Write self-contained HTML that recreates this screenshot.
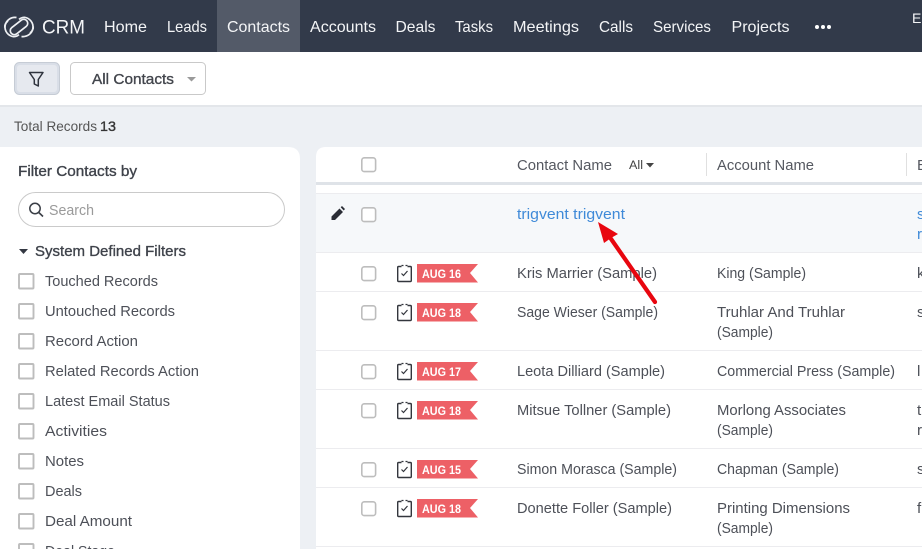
<!DOCTYPE html>
<html><head><meta charset="utf-8"><style>
html,body{margin:0;padding:0;width:922px;height:549px;overflow:hidden;background:#edf0f4}
svg{display:block}
text{font-family:"Liberation Sans",sans-serif;font-size:15.2px;fill:#4d5058}
.n{fill:#f4f5f7;font-size:15.6px}
.h{fill:#555860;font-size:15.2px}
.b{fill:#3f434b;font-size:15px;stroke:#3f434b;stroke-width:.35px}
.t{fill:#fff;font-weight:bold;font-size:11.5px}
.c{fill:#fff;stroke:#bdbdbd;stroke-width:1.6}
</style></head><body>
<svg width="922" height="549" viewBox="0 0 922 549" xmlns="http://www.w3.org/2000/svg">
<defs>
<g id="tag">
<path d="M417 264H478L470 273L478 282.500H417Z" fill="#ed6066"/>
<rect x="397.700" y="266.500" width="13.600" height="15" rx="1" fill="none" stroke="#33363d" stroke-width="1.400"/>
<rect x="401.500" y="264" width="6" height="4" fill="#fff"/>
<path d="M401.500 265.500H407.500" stroke="#33363d" stroke-width="1.300" stroke-dasharray="2 2"/>
<path d="M401.500 273.500L403.500 275.500L407.500 271" fill="none" stroke="#33363d" stroke-width="1.200"/>
</g>
</defs>

<rect width="922" height="52" fill="#323a4a"/>
<rect x="217" width="83" height="52" fill="#535a68"/>
<g fill="none" stroke="#eef0f3" stroke-width="1.700">
<path d="M16.500 17.500A10 9.700 0 0 0 13.500 36.700C16 36.700 17.500 35.900 19 34.600"/>
<path d="M21.500 36.500A10 9.700 0 0 0 24.500 17.300C22 17.300 20.500 18.100 19 19.400"/>
<rect x="9" y="23" width="20" height="8" rx="4" transform="rotate(-38 19 27)"/>
<path d="M8 21C5.500 23 4.500 25 4.800 27.500M30 33C32.500 31 33.500 29 33.200 26.500"/>
</g>
<text x="42" y="33.500" class="n" style="font-size:19px" textLength="43" lengthAdjust="spacingAndGlyphs">CRM</text>
<text x="104" y="32" class="n" textLength="43" lengthAdjust="spacingAndGlyphs">Home</text>
<text x="167" y="32" class="n" textLength="40" lengthAdjust="spacingAndGlyphs">Leads</text>
<text x="227" y="32" class="n" textLength="63" lengthAdjust="spacingAndGlyphs">Contacts</text>
<text x="310" y="32" class="n" textLength="66" lengthAdjust="spacingAndGlyphs">Accounts</text>
<text x="395.500" y="32" class="n" textLength="40" lengthAdjust="spacingAndGlyphs">Deals</text>
<text x="455" y="32" class="n" textLength="38" lengthAdjust="spacingAndGlyphs">Tasks</text>
<text x="513" y="32" class="n" textLength="66" lengthAdjust="spacingAndGlyphs">Meetings</text>
<text x="599" y="32" class="n" textLength="34" lengthAdjust="spacingAndGlyphs">Calls</text>
<text x="653" y="32" class="n" textLength="58" lengthAdjust="spacingAndGlyphs">Services</text>
<text x="731.500" y="32" class="n" textLength="58" lengthAdjust="spacingAndGlyphs">Projects</text>
<circle cx="817" cy="27" r="2" fill="#fff"/><circle cx="823" cy="27" r="2" fill="#fff"/><circle cx="829" cy="27" r="2" fill="#fff"/>
<text x="912" y="23" class="n" style="font-size:14px">En</text>

<rect y="52" width="922" height="53" fill="#fff"/>
<rect y="105" width="922" height="2" fill="#e3e6ea"/>
<rect x="14.500" y="62.500" width="45" height="32" rx="5" fill="#d9dee7" stroke="#c6ccd5"/>
<rect x="17" y="65" width="40" height="27" rx="3" fill="#e6e9ef"/>
<path d="M29.500 72.500H43L38.300 79.500V86L34.300 84V79.500Z" fill="none" stroke="#2f343e" stroke-width="1.500" stroke-linejoin="round"/>
<rect x="70.500" y="62.500" width="135" height="32" rx="4" fill="#fff" stroke="#c9c9c9"/>
<text x="92" y="84" class="b" style="fill:#43464d;stroke:#43464d" textLength="82" lengthAdjust="spacingAndGlyphs">All Contacts</text>
<path d="M187 77H196L191.500 81.500Z" fill="#9a9a9a"/>
<text x="14" y="131" style="font-size:13.800px;fill:#555" textLength="83" lengthAdjust="spacingAndGlyphs">Total Records</text>
<text x="100" y="131" style="font-size:13.800px;fill:#333;stroke:#333;stroke-width:.35px" textLength="16" lengthAdjust="spacingAndGlyphs">13</text>

<path d="M0 147H288Q300 147 300 159V549H0Z" fill="#fff"/>
<text x="18" y="176" class="b" textLength="119" lengthAdjust="spacingAndGlyphs">Filter Contacts by</text>
<rect x="18.500" y="192.500" width="266" height="34" rx="17" fill="#fff" stroke="#cacaca"/>
<circle cx="35" cy="208.500" r="5.200" fill="none" stroke="#3b3f47" stroke-width="1.500"/>
<path d="M38.800 212.500L43 216.500" stroke="#3b3f47" stroke-width="1.600"/>
<text x="49" y="215" style="fill:#9a9a9a" textLength="45" lengthAdjust="spacingAndGlyphs">Search</text>
<path d="M19 249H28L23.500 254Z" fill="#333842"/>
<text x="35" y="256" class="b" textLength="151" lengthAdjust="spacingAndGlyphs">System Defined Filters</text>

<g fill="#fff" stroke="#bdbdbd" stroke-width="1.900">
<rect x="19" y="274" width="14.500" height="14.500" rx="1"/>
<rect x="19" y="304" width="14.500" height="14.500" rx="1"/>
<rect x="19" y="334" width="14.500" height="14.500" rx="1"/>
<rect x="19" y="364" width="14.500" height="14.500" rx="1"/>
<rect x="19" y="394" width="14.500" height="14.500" rx="1"/>
<rect x="19" y="424" width="14.500" height="14.500" rx="1"/>
<rect x="19" y="454" width="14.500" height="14.500" rx="1"/>
<rect x="19" y="484" width="14.500" height="14.500" rx="1"/>
<rect x="19" y="514" width="14.500" height="14.500" rx="1"/>
<rect x="19" y="544" width="14.500" height="14.500" rx="1"/>
</g>
<text x="45" y="286" textLength="113" lengthAdjust="spacingAndGlyphs">Touched Records</text>
<text x="45" y="316" textLength="130" lengthAdjust="spacingAndGlyphs">Untouched Records</text>
<text x="45" y="346" textLength="93" lengthAdjust="spacingAndGlyphs">Record Action</text>
<text x="45" y="376" textLength="154" lengthAdjust="spacingAndGlyphs">Related Records Action</text>
<text x="45" y="406" textLength="125" lengthAdjust="spacingAndGlyphs">Latest Email Status</text>
<text x="45" y="436" textLength="62" lengthAdjust="spacingAndGlyphs">Activities</text>
<text x="45" y="466" textLength="39" lengthAdjust="spacingAndGlyphs">Notes</text>
<text x="45" y="496" textLength="37" lengthAdjust="spacingAndGlyphs">Deals</text>
<text x="45" y="526" textLength="87" lengthAdjust="spacingAndGlyphs">Deal Amount</text>
<text x="45" y="556" textLength="70" lengthAdjust="spacingAndGlyphs">Deal Stage</text>

<path d="M922 147H326Q316 147 316 157V549H922Z" fill="#fff"/>
<rect x="316" y="182" width="606" height="3" fill="#dfe3e8"/>
<rect x="316" y="193" width="606" height="59" fill="#f6f8fa"/>
<g fill="#ececef">
<rect x="316" y="193" width="606" height="1"/>
<rect x="316" y="252" width="606" height="1"/>
<rect x="316" y="291" width="606" height="1"/>
<rect x="316" y="350" width="606" height="1"/>
<rect x="316" y="389" width="606" height="1"/>
<rect x="316" y="448" width="606" height="1"/>
<rect x="316" y="487" width="606" height="1"/>
<rect x="316" y="546" width="606" height="1"/>
<rect x="706" y="153" width="1" height="23" fill="#e0e0e0"/>
<rect x="906" y="153" width="1" height="23" fill="#e0e0e0"/>
</g>
<rect class="c" x="361.800" y="157.800" width="13.800" height="13.800" rx="2.500"/>
<rect class="c" x="361.800" y="207.800" width="13.800" height="13.800" rx="2.500"/>
<rect class="c" x="361.800" y="266.800" width="13.800" height="13.800" rx="2.500"/>
<rect class="c" x="361.800" y="305.800" width="13.800" height="13.800" rx="2.500"/>
<rect class="c" x="361.800" y="364.800" width="13.800" height="13.800" rx="2.500"/>
<rect class="c" x="361.800" y="403.800" width="13.800" height="13.800" rx="2.500"/>
<rect class="c" x="361.800" y="462.800" width="13.800" height="13.800" rx="2.500"/>
<rect class="c" x="361.800" y="501.800" width="13.800" height="13.800" rx="2.500"/>

<text x="517" y="170" class="h" textLength="95" lengthAdjust="spacingAndGlyphs">Contact Name</text>
<text x="629" y="169" style="font-size:11.500px;fill:#444" textLength="14" lengthAdjust="spacingAndGlyphs">All</text>
<path d="M646 163H654L650 167.500Z" fill="#444"/>
<text x="717" y="170" class="h" textLength="97" lengthAdjust="spacingAndGlyphs">Account Name</text>
<text x="917" y="170" class="h">E</text>

<path d="M331.500 216.500L339.500 208.500L343 212L335 220H331.500Z M340.700 207.300L342 206L345 209L343.700 210.500Z" fill="#2a2d35"/>
<text x="517" y="219" style="fill:#3f8ad8" textLength="108" lengthAdjust="spacingAndGlyphs">trigvent trigvent</text>
<text x="917" y="219" style="fill:#3f8ad8">s</text>
<text x="917" y="239" style="fill:#3f8ad8">r</text>

<use href="#tag"/>
<text x="422" y="278" class="t" textLength="39" lengthAdjust="spacingAndGlyphs">AUG 16</text>
<text x="517" y="278" textLength="140" lengthAdjust="spacingAndGlyphs">Kris Marrier (Sample)</text>
<text x="717" y="278" textLength="89" lengthAdjust="spacingAndGlyphs">King (Sample)</text>
<text x="917" y="278">k</text>

<use href="#tag" y="39"/>
<text x="422" y="317" class="t" textLength="39" lengthAdjust="spacingAndGlyphs">AUG 18</text>
<text x="517" y="317" textLength="141" lengthAdjust="spacingAndGlyphs">Sage Wieser (Sample)</text>
<text x="717" y="317" textLength="128" lengthAdjust="spacingAndGlyphs">Truhlar And Truhlar</text>
<text x="717" y="337" textLength="56" lengthAdjust="spacingAndGlyphs">(Sample)</text>
<text x="917" y="317">s</text>

<use href="#tag" y="98"/>
<text x="422" y="376" class="t" textLength="39" lengthAdjust="spacingAndGlyphs">AUG 17</text>
<text x="517" y="376" textLength="148" lengthAdjust="spacingAndGlyphs">Leota Dilliard (Sample)</text>
<text x="717" y="376" textLength="178" lengthAdjust="spacingAndGlyphs">Commercial Press (Sample)</text>
<text x="917" y="376">l</text>

<use href="#tag" y="137"/>
<text x="422" y="415" class="t" textLength="39" lengthAdjust="spacingAndGlyphs">AUG 18</text>
<text x="517" y="415" textLength="154" lengthAdjust="spacingAndGlyphs">Mitsue Tollner (Sample)</text>
<text x="717" y="415" textLength="129" lengthAdjust="spacingAndGlyphs">Morlong Associates</text>
<text x="717" y="435" textLength="56" lengthAdjust="spacingAndGlyphs">(Sample)</text>
<text x="917" y="415">t</text>
<text x="917" y="435">r</text>

<use href="#tag" y="196"/>
<text x="422" y="474" class="t" textLength="39" lengthAdjust="spacingAndGlyphs">AUG 15</text>
<text x="517" y="474" textLength="160" lengthAdjust="spacingAndGlyphs">Simon Morasca (Sample)</text>
<text x="717" y="474" textLength="122" lengthAdjust="spacingAndGlyphs">Chapman (Sample)</text>
<text x="917" y="474">s</text>

<use href="#tag" y="235"/>
<text x="422" y="513" class="t" textLength="39" lengthAdjust="spacingAndGlyphs">AUG 18</text>
<text x="517" y="513" textLength="155" lengthAdjust="spacingAndGlyphs">Donette Foller (Sample)</text>
<text x="717" y="513" textLength="133" lengthAdjust="spacingAndGlyphs">Printing Dimensions</text>
<text x="717" y="533" textLength="56" lengthAdjust="spacingAndGlyphs">(Sample)</text>
<text x="917" y="513">f</text>

<path d="M598 222L618 234L611 238L604 243Z" fill="#e8060f"/>
<path d="M609 236L655 302" stroke="#e8060f" stroke-width="4.200" stroke-linecap="round"/>
</svg>
</body></html>
